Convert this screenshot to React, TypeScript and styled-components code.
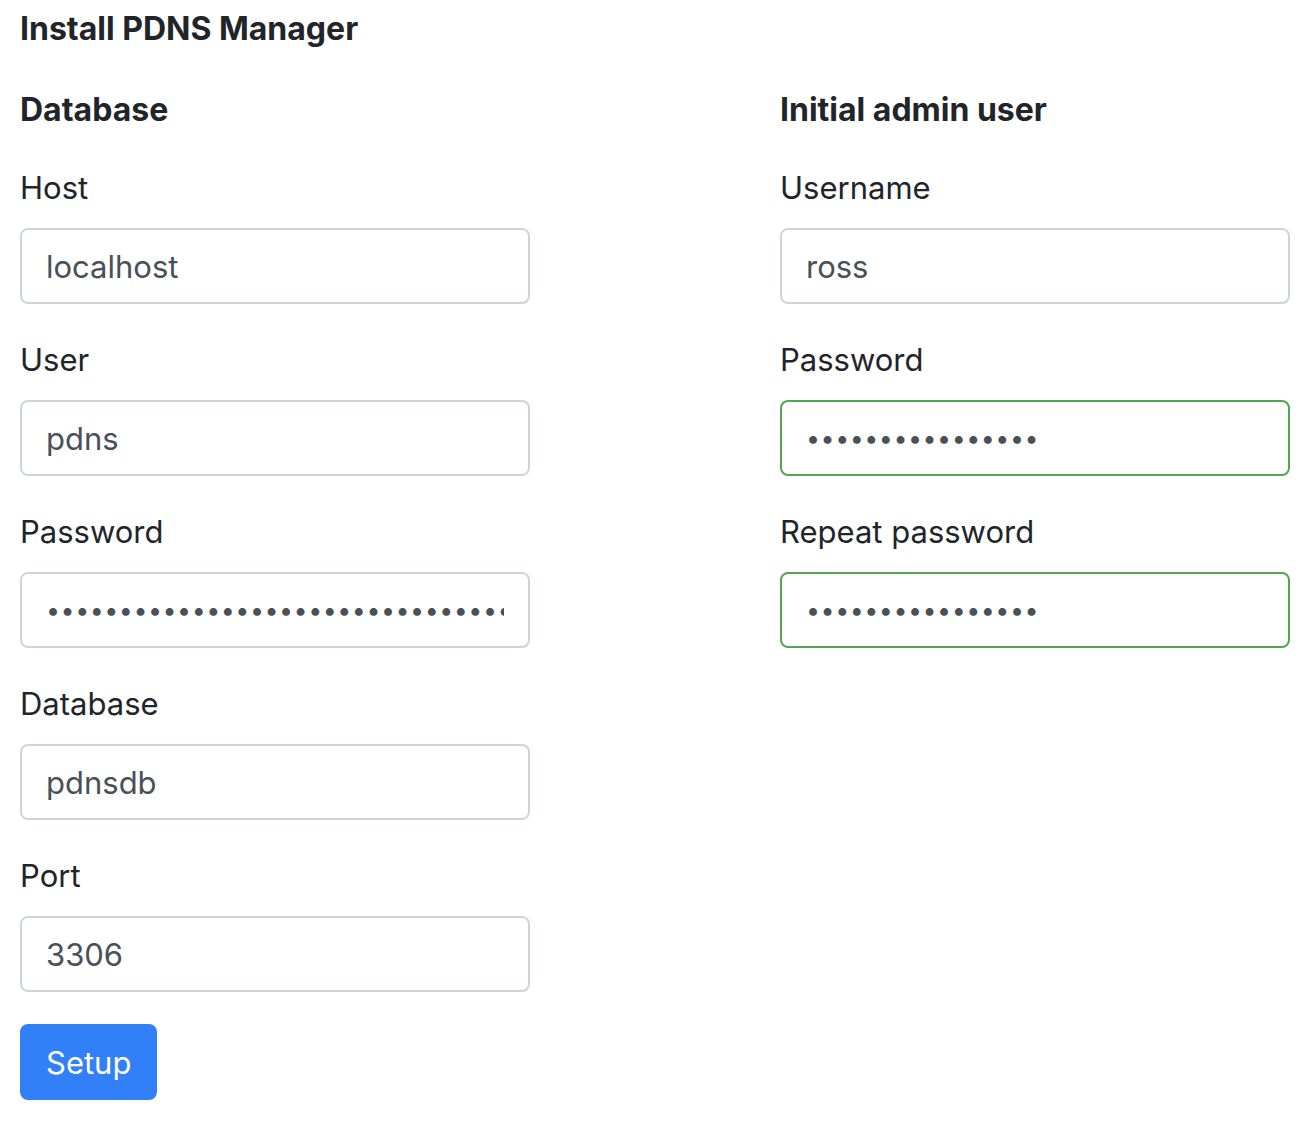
import styled, { createGlobalStyle } from "styled-components";

const GlobalStyle = createGlobalStyle`
    * {
        box-sizing: border-box;
    }
    body {
        margin: 0;
        background: #ffffff;
        font-family: Inter, "Noto Sans", "Liberation Sans", sans-serif;
        color: #212529;
    }
`;

const databaseFields = [
    { label: "Host", type: "text", value: "localhost" },
    { label: "User", type: "text", value: "pdns" },
    { label: "Password", type: "password", value: "supersecretdatabasepassword1234567890ab" },
    { label: "Database", type: "text", value: "pdnsdb" },
    { label: "Port", type: "text", value: "3306" },
];

const adminFields = [
    { label: "Username", type: "text", value: "ross", valid: false },
    { label: "Password", type: "password", value: "adminpassword123", valid: true },
    { label: "Repeat password", type: "password", value: "adminpassword123", valid: true },
];

const App = () => {
    return (
        <>
            <GlobalStyle />
            <Page>
                <Title>Install PDNS Manager</Title>
                <Columns>
                    <Column>
                        <SectionTitle>Database</SectionTitle>
                        {databaseFields.map((f) => (
                            <FormGroup key={f.label}>
                                <Label>{f.label}</Label>
                                <Input type={f.type} defaultValue={f.value} $password={f.type === "password"} />
                            </FormGroup>
                        ))}
                        <SetupButton type="button">Setup</SetupButton>
                    </Column>
                    <Column>
                        <SectionTitle>Initial admin user</SectionTitle>
                        {adminFields.map((f) => (
                            <FormGroup key={f.label}>
                                <Label>{f.label}</Label>
                                <Input type={f.type} defaultValue={f.value} $valid={f.valid} $password={f.type === "password"} />
                            </FormGroup>
                        ))}
                    </Column>
                </Columns>
            </Page>
        </>
    );
};

export default App;

const Page = styled.div`
    padding: 7px 20px 40px;
`;

const Title = styled.h1`
    margin: 0 0 42px;
    font-size: 32px;
    line-height: 43px;
    font-weight: 700;
`;

const Columns = styled.div`
    display: grid;
    grid-template-columns: 510px 510px;
    column-gap: 250px;
    align-items: start;
`;

const Column = styled.div`
    display: flex;
    flex-direction: column;
`;

const SectionTitle = styled.h2`
    margin: 0 0 36px;
    font-size: 32px;
    line-height: 36px;
    font-weight: 700;
`;

const FormGroup = styled.div`
    display: flex;
    flex-direction: column;
    margin-bottom: 32px;
`;

const Label = styled.label`
    font-size: 31px;
    line-height: 48px;
    margin-bottom: 16px;
`;

const Input = styled.input<{ $valid?: boolean; $password?: boolean }>`
    height: 76px;
    width: 100%;
    padding: 0 24px;
    border: 2px solid ${(p) => (p.$valid ? "#52a552" : "#ced4da")};
    border-radius: 8px;
    font-family: Inter, "Noto Sans", "Liberation Sans", sans-serif;
    font-size: ${(p) => (p.$password ? "25px" : "31px")};
    letter-spacing: ${(p) => (p.$password ? "0.5px" : "normal")};
    color: #495057;
    background: #ffffff;
    outline: none;
`;

const SetupButton = styled.button`
    align-self: flex-start;
    height: 76px;
    padding: 0 24px;
    border: 2px solid #3180f7;
    border-radius: 8px;
    background: #3180f7;
    color: #ffffff;
    font-family: Inter, "Noto Sans", "Liberation Sans", sans-serif;
    font-size: 31px;
    cursor: pointer;
`;
